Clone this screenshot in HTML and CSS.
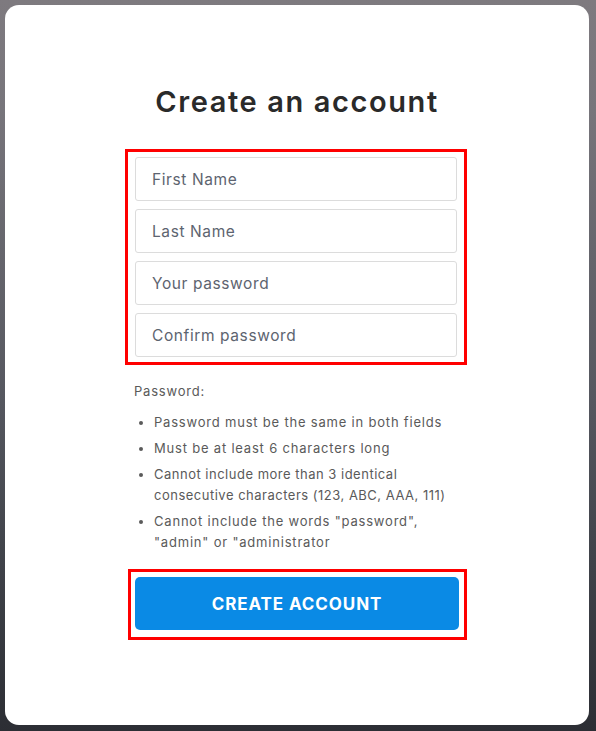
FILE: index.html
```html
<!DOCTYPE html>
<html lang="en">
<head>
    <meta charset="UTF-8">
    <meta name="viewport" content="width=device-width, initial-scale=1.0">
    <title>Create an account</title>
    <link rel="stylesheet" href="styles.css">
</head>
<body>
    <div class="card">
        <h1>Create an account</h1>

        <div class="fields">
            <input type="text" placeholder="First Name">
            <input type="text" placeholder="Last Name">
            <input type="password" placeholder="Your password">
            <input type="password" placeholder="Confirm password">
        </div>

        <div class="rules">
            <p>Password:</p>
            <ul>
                <li>Password must be the same in both fields</li>
                <li>Must be at least 6 characters long</li>
                <li class="tight">Cannot include more than 3 identical consecutive characters (123, ABC, AAA, 111)</li>
                <li>Cannot include the words "password", "admin" or "administrator</li>
            </ul>
        </div>

        <div class="submit-box">
            <button class="submit-btn">CREATE ACCOUNT</button>
        </div>
    </div>
</body>
</html>
```

FILE: styles.css
```css
* {
    box-sizing: border-box;
}

body {
    margin: 0;
    padding: 5px 7px 6px 5px;
    min-height: 100vh;
    background: linear-gradient(180deg, #7e7a7f 0%, #77757b 15%, #65656c 35%, #55575f 55%, #41444b 75%, #2c2e34 100%);
    font-family: Inter, 'Open Sans', sans-serif;
    color: #333;
}

.card {
    background-color: #fff;
    border-radius: 14px;
    min-height: 720px;
    padding: 79px 0 85px;
    display: flex;
    flex-direction: column;
    align-items: center;
}

h1 {
    margin: 0 0 29px;
    font-size: 29px;
    line-height: 36px;
    font-weight: 600;
    letter-spacing: 1.6px;
    color: #2a2a2a;
}

.fields {
    width: 342px;
    margin-right: 2px;
    border: 3px solid #ff0000;
    padding: 5px 7px;
    display: flex;
    flex-direction: column;
    gap: 8px;
}

.fields input {
    height: 44px;
    width: 100%;
    border: 1px solid #dcdcdc;
    border-radius: 3px;
    padding: 0 16px;
    font-family: inherit;
    font-size: 15.5px;
    letter-spacing: 0.6px;
    color: #333;
}

.fields input::placeholder {
    color: #5d6470;
}

.rules {
    width: 326px;
    margin: 16px 0 16px;
    font-size: 13px;
    letter-spacing: 0.8px;
    color: #5a5a5a;
}

.rules p {
    margin: 0;
    line-height: 21px;
}

.rules ul {
    margin: 10px 0 0;
    padding-left: 20px;
}

.rules li {
    line-height: 21px;
    margin-bottom: 5px;
}

.rules li:last-child {
    margin-bottom: 0;
}

.rules li.tight {
    letter-spacing: 0.5px;
}

.submit-box {
    width: 339px;
    margin-left: 1px;
    border: 3px solid #ff0000;
    padding: 5px 4px 7px;
}

.submit-btn {
    display: block;
    width: 324px;
    height: 53px;
    border: none;
    border-radius: 5px;
    background-color: #0a8ae5;
    color: #fff;
    font-family: inherit;
    font-size: 17px;
    font-weight: 700;
    letter-spacing: 0.9px;
    cursor: pointer;
}
```
